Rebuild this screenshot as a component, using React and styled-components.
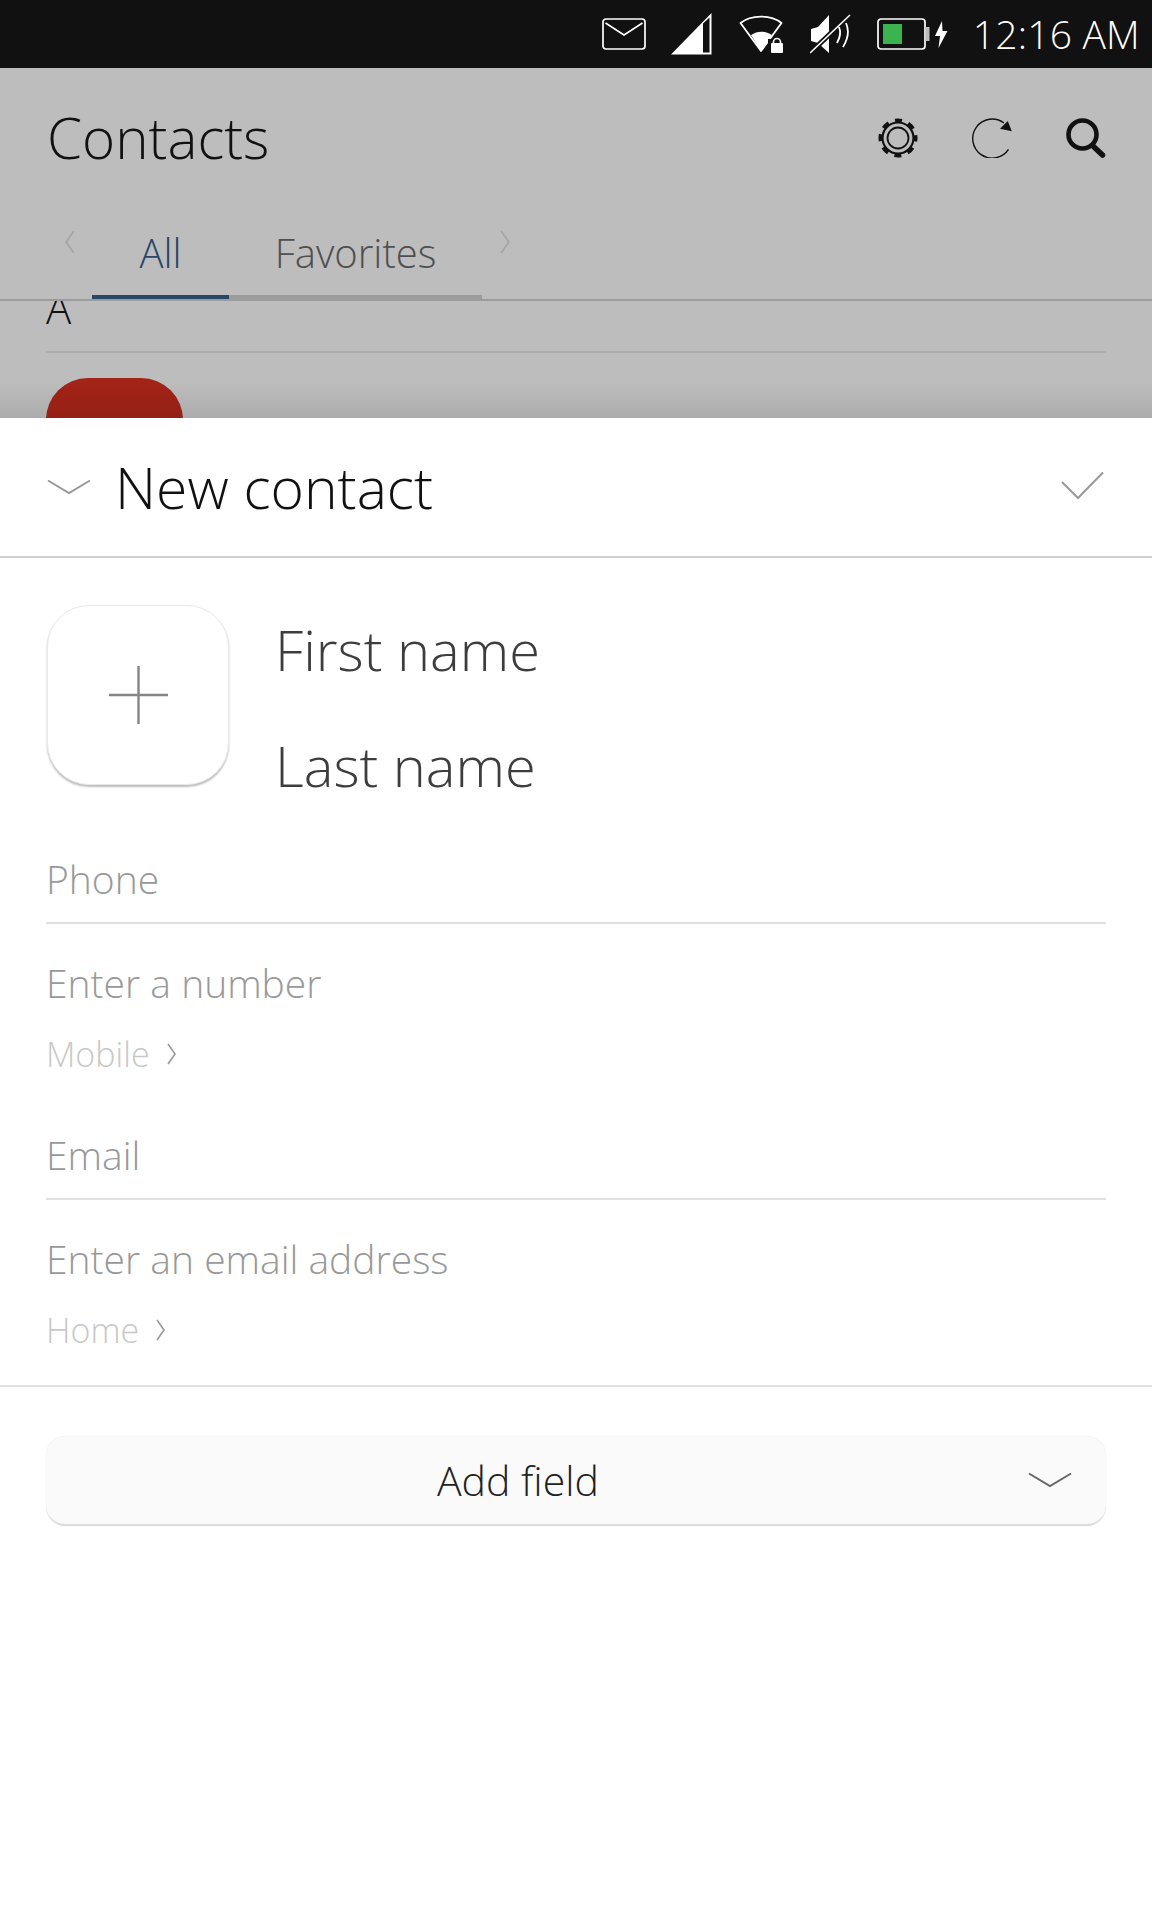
import styled, { createGlobalStyle } from 'styled-components'

const GlobalStyle = createGlobalStyle`
  html, body {
    margin: 0;
    background: #fff;
  }
  body {
    font-family: 'Open Sans', 'Noto Sans', sans-serif;
    font-weight: 300;
  }
`

const Page = styled.div`
  display: flex;
  flex-direction: column;
  width: 1152px;
  height: 1920px;
  overflow: hidden;
  background: #fff;
`

const StatusBar = styled.div`
  display: flex;
  align-items: center;
  justify-content: flex-end;
  flex: 0 0 68px;
  padding-right: 12px;
  box-sizing: border-box;
  background: #111;
`

const StatusIcon = styled.svg`
  display: block;
  margin-left: ${({ $gap }) => $gap}px;
`

const Clock = styled.span`
  margin-left: 25px;
  color: #fff;
  font-size: 39px;
  line-height: 68px;
  letter-spacing: 0.2px;
  white-space: nowrap;
`

const Backdrop = styled.div`
  position: relative;
  display: flex;
  flex-direction: column;
  flex: 0 0 350px;
  overflow: hidden;
  background: #bdbdbd;

  &::after {
    content: '';
    position: absolute;
    left: 0;
    right: 0;
    bottom: 0;
    height: 36px;
    background: linear-gradient(rgba(0, 0, 0, 0), rgba(0, 0, 0, 0.09));
  }
`

const AppHeader = styled.div`
  display: flex;
  align-items: center;
  justify-content: space-between;
  flex: 0 0 140px;
  padding: 0 46px 0 47px;
`

const AppTitle = styled.h1`
  margin: 0;
  color: #111;
  font-size: 56.5px;
  font-weight: 300;
  line-height: 1;
`

const Actions = styled.div`
  display: flex;
  align-items: center;
  gap: 54px;
`

const TabBar = styled.div`
  position: relative;
  display: flex;
  align-items: flex-end;
  flex: 0 0 93px;
  padding-left: 92px;
  box-sizing: border-box;
  border-bottom: 2px solid #9c9c9c;
`

const Tab = styled.div`
  display: flex;
  justify-content: center;
  width: ${({ $width }) => $width}px;
  height: 66px;
  box-sizing: border-box;
  border-bottom: 4px solid ${({ $active }) => ($active ? '#2a4669' : '#9c9c9c')};
  color: ${({ $active }) => ($active ? '#2a4669' : '#4f4f4f')};
  font-size: 40px;
  line-height: 40px;
`

const TabArrow = styled.svg`
  position: absolute;
  top: 22px;
  left: ${({ $left }) => $left}px;
`

const ListArea = styled.div`
  display: flex;
  flex-direction: column;
  flex: 1;
  padding: 0 46px;
  overflow: hidden;
`

const SectionLetter = styled.div`
  flex: 0 0 68px;
  margin-top: -16px;
  border-bottom: 2px solid #acacac;
  box-sizing: border-box;
  color: #111;
  font-size: 42px;
  line-height: 46px;
`

const ContactTile = styled.div`
  flex: 0 0 160px;
  width: 137px;
  margin-top: 25px;
  border-radius: 42px;
  background: #a32317;
`

const Sheet = styled.div`
  display: flex;
  flex-direction: column;
  flex: 1;
`

const SheetHeader = styled.div`
  display: flex;
  align-items: center;
  flex: 0 0 140px;
  padding: 0 47px;
  box-sizing: border-box;
  border-bottom: 2px solid #cdcdcd;
`

const SheetTitle = styled.h2`
  flex: 1;
  margin: 0 0 0 24px;
  color: #111;
  font-size: 57px;
  font-weight: 300;
  line-height: 1;
`

const NameRow = styled.div`
  display: flex;
  align-items: flex-start;
  padding: 47px 47px 0;
`

const AvatarButton = styled.div`
  display: flex;
  align-items: center;
  justify-content: center;
  flex: 0 0 182px;
  height: 180px;
  border-radius: 42px;
  box-sizing: border-box;
  border: 1px solid #e9e9e9;
  background: #fff;
  box-shadow: 0 2px 2px #bdbdbd;
`

const NameFields = styled.div`
  display: flex;
  flex-direction: column;
  gap: 42px;
  margin: 7px 0 0 46px;
`

const NameText = styled.div`
  height: 74px;
  color: #3d3d3d;
  font-size: 56px;
  line-height: 74px;
`

const Section = styled.div`
  padding: ${({ $top }) => $top}px 46px 0;
`

const SectionLabel = styled.div`
  height: 71px;
  border-bottom: 2px solid #e0e0e0;
  color: #999;
  font-size: 39px;
  line-height: 56px;
`

const Placeholder = styled.div`
  margin-top: 31px;
  color: #999;
  font-size: 39px;
  line-height: 56px;
`

const TypeRow = styled.div`
  display: flex;
  align-items: center;
  gap: 17px;
  margin-top: 20px;
  color: #c8c8c8;
  font-size: 34px;
  line-height: 46px;
`

const FullDivider = styled.div`
  height: 2px;
  margin-top: 32px;
  background: #e0e0e0;
`

const AddField = styled.div`
  display: flex;
  align-items: center;
  justify-content: space-between;
  height: 90px;
  margin: 49px 46px 0;
  padding: 0 34px 0 391px;
  border-radius: 20px;
  box-sizing: border-box;
  border-bottom: 2px solid #dcdcdc;
  background: #fafafa;
  box-shadow: 0 0 1px #d8d8d8;
  color: #222;
  font-size: 41px;
`

const Chevron = ({ color = '#999', width = 44 }) => (
  <svg width={width} height={16} viewBox="0 0 44 16" fill="none">
    <path d="M1 1.5 22 14 43 1.5" stroke={color} strokeWidth="2" />
  </svg>
)

const MailIcon = () => (
  <StatusIcon $gap={0} width="44" height="32" viewBox="0 0 44 32" fill="none" stroke="#fff" strokeWidth="1.7">
    <rect x="1" y="1" width="42" height="30" rx="3" />
    <path d="M3.5 5 22 17 40.5 5" />
  </StatusIcon>
)

const SignalIcon = () => (
  <StatusIcon $gap={25} width="41" height="42" viewBox="0 0 41 42" fill="none">
    <path d="M0 41.5 40.5 0V41.5Z" fill="#fff" />
    <path d="M32 10.5V39.5H38.5V4.5Z" fill="#111" />
  </StatusIcon>
)

const WifiIcon = () => (
  <StatusIcon $gap={27} width="45" height="38" viewBox="0 0 45 38" fill="none">
    <path d="M1.5 8C12 -0.5 32 -0.5 42.5 8L22 36Z" stroke="#fff" strokeWidth="1.8" strokeLinejoin="round" />
    <path d="M12 20C18 15.5 27 15.5 33 20L22 36Z" fill="#fff" />
    <rect x="29" y="24" width="16" height="14" fill="#111" />
    <rect x="32" y="28" width="12" height="10" rx="1" fill="#fff" />
    <path d="M34.5 28.5V27a3.5 3.5 0 0 1 7 0V28.5" stroke="#fff" strokeWidth="1.6" />
  </StatusIcon>
)

const MuteIcon = () => (
  <StatusIcon $gap={26} width="42" height="40" viewBox="0 0 42 40" fill="none">
    <path d="M1 15 8 13 19 1V39L8 29 1 27Z" fill="#fff" />
    <path d="M0 39 40 1" stroke="#111" strokeWidth="5" />
    <path d="M0 39 40 1" stroke="#fff" strokeWidth="1.6" />
    <path d="M27 29Q32 20 29 13" stroke="#fff" strokeWidth="1.8" />
    <path d="M33 33Q41 20 36 9" stroke="#fff" strokeWidth="1.8" />
  </StatusIcon>
)

const BatteryIcon = () => (
  <StatusIcon $gap={25} width="71" height="32" viewBox="0 0 71 32" fill="none">
    <rect x="1" y="1" width="47" height="30" rx="3" stroke="#fff" strokeWidth="1.7" />
    <rect x="6" y="6" width="19" height="20" fill="#3bb34f" />
    <rect x="48.5" y="9" width="4" height="14" fill="#bbb" />
    <path d="M65 3 58 18H63L61.5 30 70.5 13H65.5Z" fill="#fff" />
  </StatusIcon>
)

const GearIcon = () => (
  <svg width="40" height="40" viewBox="0 0 40 40" fill="none">
    <circle cx="20" cy="20" r="15.5" stroke="#111" strokeWidth="2.2" />
    <circle cx="20" cy="20" r="10.5" stroke="#111" strokeWidth="1.8" />
    <circle cx="20" cy="20" r="17.5" stroke="#111" strokeWidth="4" strokeDasharray="7 6.74" strokeDashoffset="3.5" />
  </svg>
)

const RefreshIcon = () => (
  <svg width="40" height="40" viewBox="0 0 40 40" fill="none">
    <path d="M36.5 31.3A19.5 19.5 0 1 1 32 5" stroke="#111" strokeWidth="1.4" />
    <path d="M35.8 3 39.8 13.3 28 10.7Z" fill="#111" />
  </svg>
)

const SearchIcon = () => (
  <svg width="40" height="40" viewBox="0 0 40 40" fill="none">
    <circle cx="16.5" cy="16.5" r="14" stroke="#111" strokeWidth="4.6" />
    <path d="M28 29 36.5 37" stroke="#111" strokeWidth="5.5" strokeLinecap="round" />
  </svg>
)

const CheckIcon = () => (
  <svg width="44" height="32" viewBox="0 0 44 32" fill="none">
    <path d="M1 11 17 27 42 1.5" stroke="#999" strokeWidth="2" />
  </svg>
)

const PlusIcon = () => (
  <svg width="59" height="58" viewBox="0 0 59 58" fill="none">
    <path d="M29.5 0V58M0 29H59" stroke="#858585" strokeWidth="2.4" />
  </svg>
)

const SmallArrow = () => (
  <svg width="9" height="22" viewBox="0 0 9 22" fill="none">
    <path d="M1 1 8 11 1 21" stroke="#999" strokeWidth="1.6" />
  </svg>
)

const App = () => (
  <Page>
    <GlobalStyle />
    <StatusBar>
      <MailIcon />
      <SignalIcon />
      <WifiIcon />
      <MuteIcon />
      <BatteryIcon />
      <Clock>12:16 AM</Clock>
    </StatusBar>

    <Backdrop>
      <AppHeader>
        <AppTitle>Contacts</AppTitle>
        <Actions>
          <GearIcon />
          <RefreshIcon />
          <SearchIcon />
        </Actions>
      </AppHeader>
      <TabBar>
        <TabArrow $left={65} width="10" height="24" viewBox="0 0 9 22" fill="none">
          <path d="M8 1 1 11 8 21" stroke="#a5a5a5" strokeWidth="1.6" />
        </TabArrow>
        <Tab $active $width={137}>All</Tab>
        <Tab $width={253}>Favorites</Tab>
        <TabArrow $left={500} width="10" height="24" viewBox="0 0 9 22" fill="none">
          <path d="M1 1 8 11 1 21" stroke="#a5a5a5" strokeWidth="1.6" />
        </TabArrow>
      </TabBar>
      <ListArea>
        <SectionLetter>A</SectionLetter>
        <ContactTile />
      </ListArea>
    </Backdrop>

    <Sheet>
      <SheetHeader>
        <Chevron />
        <SheetTitle>New contact</SheetTitle>
        <CheckIcon />
      </SheetHeader>

      <NameRow>
        <AvatarButton>
          <PlusIcon />
        </AvatarButton>
        <NameFields>
          <NameText>First name</NameText>
          <NameText>Last name</NameText>
        </NameFields>
      </NameRow>

      <Section $top={49}>
        <SectionLabel>Phone</SectionLabel>
        <Placeholder>Enter a number</Placeholder>
        <TypeRow>Mobile <SmallArrow /></TypeRow>
      </Section>

      <Section $top={50}>
        <SectionLabel>Email</SectionLabel>
        <Placeholder>Enter an email address</Placeholder>
        <TypeRow>Home <SmallArrow /></TypeRow>
      </Section>

      <FullDivider />

      <AddField>
        Add field
        <Chevron color="#666" />
      </AddField>
    </Sheet>
  </Page>
)

export default App
